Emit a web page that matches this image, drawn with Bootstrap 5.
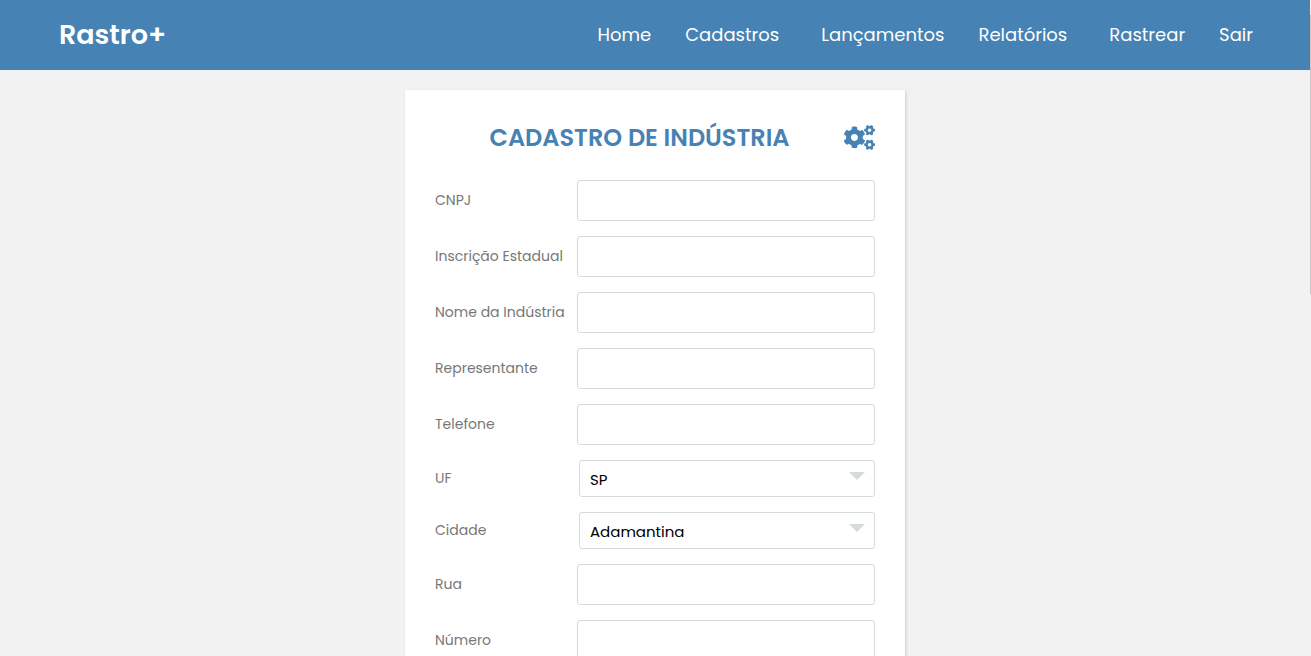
<!DOCTYPE html>
<html lang="pt-BR">
<head>
<meta charset="utf-8">
<meta name="viewport" content="width=device-width, initial-scale=1">
<title>Rastro+ | Cadastro de Indústria</title>
<link href="https://cdn.jsdelivr.net/npm/bootstrap@5.3.0/dist/css/bootstrap.min.css" rel="stylesheet">
<style>
  :root { --brand: #4682b4; --line: #d5dbdb; }
  body { background: #f2f2f2; padding-right: 1px; font-family: Poppins, Inter, sans-serif; }
  .topbar { background: var(--brand); height: 70px; padding: 0 57px 0 59px; }
  .topbar .navbar-brand { font-size: 27px; font-weight: 600; line-height: 40px; }
  .topbar .nav-link { font-size: 18px; line-height: 28px; }
  .menu { gap: 34px; }
  .has-sub { padding-right: 8px; }
  .form-panel { max-width: 500px; margin: 20px auto; padding: 30px; box-shadow: 1px 1px 3px rgba(0, 0, 0, .15); }
  .panel-title { color: var(--brand); font-size: 24px; font-weight: 600; line-height: 35px; }
  .panel-head { margin-bottom: 25px; }
  .gears { width: 31px; height: 25px; fill: var(--brand); }
  .field { margin-bottom: 15px; }
  .field label { width: 142px; padding-bottom: 1px; color: #777; font-size: 14px; line-height: 20px; }
  .field .form-control { height: 41px; border-color: var(--line); border-radius: 3px; }
  .field .form-select {
    height: 37px; margin-left: 2px; padding: 3px 10px 0; border-color: var(--line); border-radius: 3px;
    color: #000; font-size: 15px; background-position: right 9px top 11px; background-size: 16px 8px;
    background-image: url("data:image/svg+xml,%3Csvg xmlns='http://www.w3.org/2000/svg' viewBox='0 0 16 8'%3E%3Cpath fill='%23d5dbdb' d='M0 0h16L8 8z'/%3E%3C/svg%3E");
  }
  .scroll-thumb { top: 15px; right: 0; width: 1px; height: 279px; background: #c8c8c8; }
</style>
</head>
<body class="vh-100 overflow-hidden position-relative">
<nav class="topbar navbar navbar-expand navbar-dark">
  <a class="navbar-brand text-white p-0 m-0" href="#">Rastro+</a>
  <ul class="menu navbar-nav ms-auto">
    <li><a class="nav-link text-white p-0" href="#">Home</a></li>
    <li class="has-sub"><a class="nav-link text-white p-0" href="#">Cadastros</a></li>
    <li><a class="nav-link text-white p-0" href="#">Lançamentos</a></li>
    <li class="has-sub"><a class="nav-link text-white p-0" href="#">Relatórios</a></li>
    <li><a class="nav-link text-white p-0" href="#">Rastrear</a></li>
    <li><a class="nav-link text-white p-0" href="#">Sair</a></li>
  </ul>
</nav>
<main>
  <form class="form-panel bg-white">
    <div class="panel-head d-flex align-items-center">
      <h1 class="panel-title flex-grow-1 text-center mb-0">CADASTRO DE INDÚSTRIA</h1>
      <svg class="gears flex-shrink-0" viewBox="0 0 640 512" aria-hidden="true">
        <defs><path id="gear" d="M512.1 191l-8.2 14.3c-3 5.3-9.4 7.5-15.1 5.4-11.8-4.4-22.6-10.7-32.1-18.6-4.6-3.8-5.8-10.5-2.8-15.7l8.2-14.3c-6.9-8-12.3-17.3-15.9-27.4h-16.5c-6 0-11.2-4.3-12.2-10.3-2-12-2.1-24.6 0-37.1 1-6 6.2-10.4 12.2-10.4h16.5c3.6-10.1 9-19.4 15.9-27.4l-8.2-14.3c-3-5.2-1.9-11.9 2.8-15.7 9.5-7.9 20.4-14.2 32.1-18.6 5.7-2.1 12.1.1 15.1 5.4l8.2 14.3c10.5-1.9 21.2-1.9 31.7 0L552 6.3c3-5.3 9.4-7.5 15.1-5.4 11.8 4.4 22.6 10.7 32.1 18.6 4.6 3.8 5.8 10.5 2.8 15.7l-8.2 14.3c6.9 8 12.3 17.3 15.9 27.4h16.5c6 0 11.2 4.3 12.2 10.3 2 12 2.1 24.6 0 37.1-1 6-6.2 10.4-12.2 10.4h-16.5c-3.6 10.1-9 19.4-15.9 27.4l8.2 14.3c3 5.2 1.9 11.9-2.8 15.7-9.5 7.9-20.4 14.2-32.1 18.6-5.7 2.1-12.1-.1-15.1-5.4l-8.2-14.3c-10.4 1.9-21.2 1.9-31.7 0zm-10.5-58.8c38.5 29.6 82.4-14.3 52.8-52.8-38.5-29.7-82.4 14.3-52.8 52.8z"/></defs>
        <use href="#gear"/>
        <use href="#gear" y="299"/>
        <path d="M386.3 286.1l33.7 16.8c10.1 5.8 14.5 18.1 10.5 29.1-8.9 24.2-26.4 46.4-42.6 65.8-7.4 8.9-20.2 11.1-30.3 5.3l-29.1-16.8c-16 13.7-34.6 24.6-54.9 31.7v33.6c0 11.6-8.3 21.6-19.7 23.6-24.6 4.2-50.4 4.4-75.9 0-11.5-2-20-11.9-20-23.6V418c-20.3-7.2-38.9-18-54.9-31.7L74 403c-10 5.8-22.9 3.6-30.3-5.3-16.2-19.4-33.3-41.6-42.2-65.7-4-10.9.4-23.2 10.5-29.1l33.3-16.8c-3.9-20.9-3.9-42.4 0-63.4L12 205.8c-10.1-5.8-14.6-18.1-10.5-29 8.9-24.2 26-46.4 42.2-65.8 7.4-8.9 20.2-11.1 30.3-5.3l29.1 16.8c16-13.7 34.6-24.6 54.9-31.7V57.1c0-11.5 8.2-21.5 19.6-23.5 24.6-4.2 50.5-4.4 76-.1 11.5 2 20 11.9 20 23.6v33.6c20.3 7.2 38.9 18 54.9 31.7l29.1-16.8c10-5.8 22.9-3.6 30.3 5.3 16.2 19.4 33.2 41.6 42.1 65.8 4 10.9.1 23.2-10 29.1l-33.7 16.8c3.9 21 3.9 42.5 0 63.5zm-117.6 21.1c59.2-77-28.7-164.9-105.7-105.7-59.2 77 28.7 164.9 105.7 105.7z"/>
      </svg>
    </div>
    <div class="field d-flex align-items-center"><label class="flex-shrink-0" for="cnpj">CNPJ</label><input class="form-control" id="cnpj" type="text"></div>
    <div class="field d-flex align-items-center"><label class="flex-shrink-0" for="ie">Inscrição Estadual</label><input class="form-control" id="ie" type="text"></div>
    <div class="field d-flex align-items-center"><label class="flex-shrink-0" for="nome">Nome da Indústria</label><input class="form-control" id="nome" type="text"></div>
    <div class="field d-flex align-items-center"><label class="flex-shrink-0" for="rep">Representante</label><input class="form-control" id="rep" type="text"></div>
    <div class="field d-flex align-items-center"><label class="flex-shrink-0" for="tel">Telefone</label><input class="form-control" id="tel" type="tel"></div>
    <div class="field d-flex align-items-center"><label class="flex-shrink-0" for="uf">UF</label><select class="form-select" id="uf"><option>SP</option></select></div>
    <div class="field d-flex align-items-center"><label class="flex-shrink-0" for="cidade">Cidade</label><select class="form-select" id="cidade"><option>Adamantina</option></select></div>
    <div class="field d-flex align-items-center"><label class="flex-shrink-0" for="rua">Rua</label><input class="form-control" id="rua" type="text"></div>
    <div class="field d-flex align-items-center"><label class="flex-shrink-0" for="numero">Número</label><input class="form-control" id="numero" type="text"></div>
  </form>
</main>
<div class="scroll-thumb position-absolute"></div>
<script src="https://cdn.jsdelivr.net/npm/bootstrap@5.3.0/dist/js/bootstrap.bundle.min.js"></script>
</body>
</html>
